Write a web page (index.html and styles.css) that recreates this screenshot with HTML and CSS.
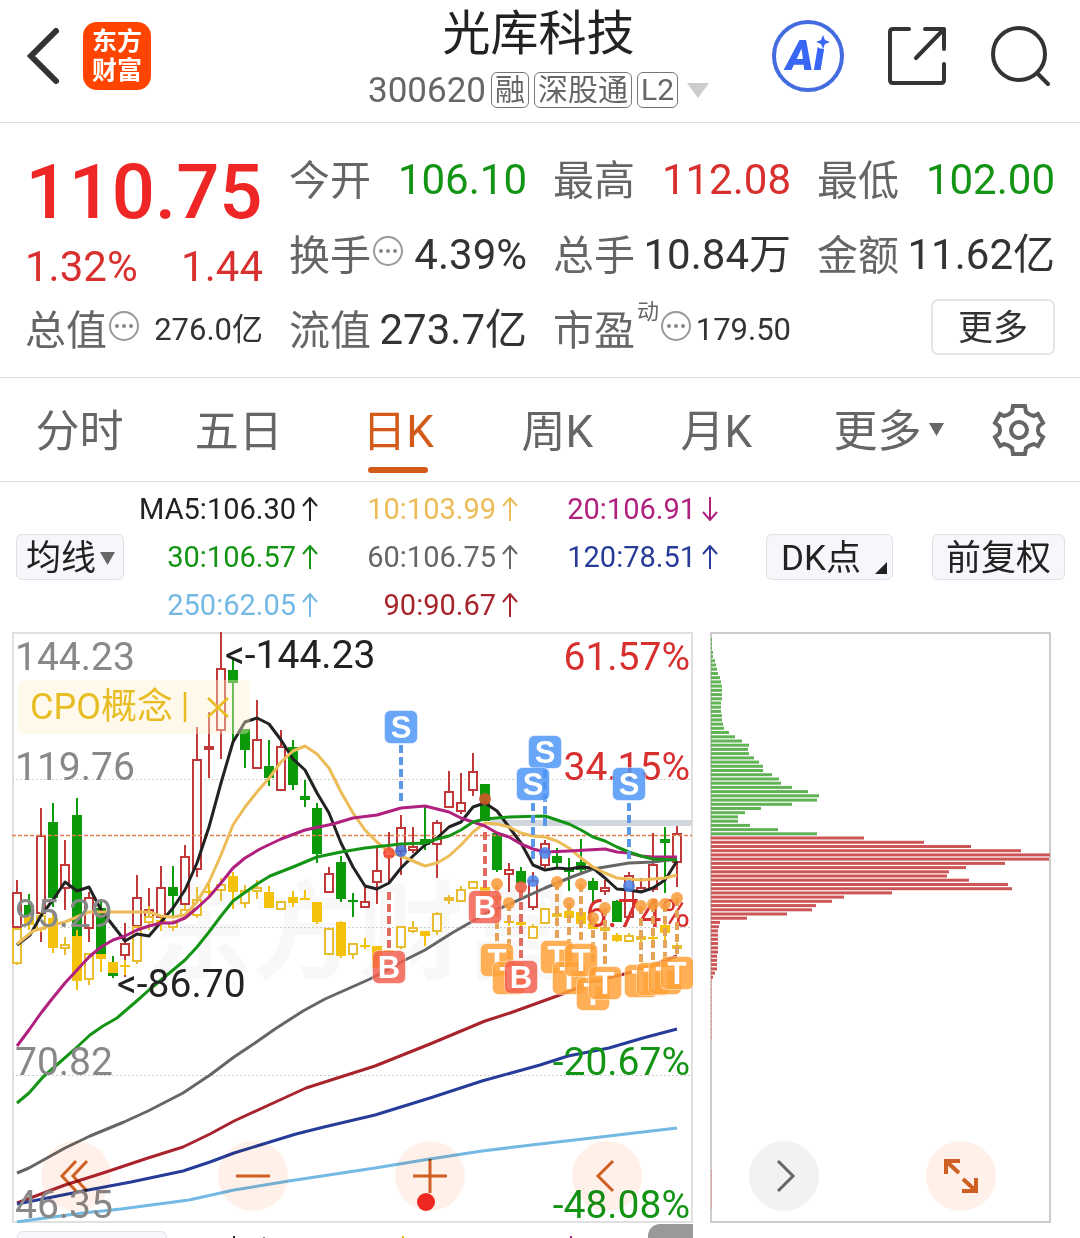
FILE: index.html
```html
<!DOCTYPE html>
<html lang="zh-CN">
<head>
<meta charset="utf-8">
<meta name="viewport" content="width=device-width, initial-scale=1">
<title>光库科技 300620</title>
<link rel="stylesheet" href="styles.css">
</head>
<body>
<header class="topbar">
  <div class="topbar-side">
    <button class="icon-btn" type="button" aria-label="返回">
      <svg width="36" height="60" viewBox="0 0 36 60" fill="none" stroke="#333" stroke-width="6" stroke-linecap="round"><path d="M31 5 6 30 31 55"/></svg>
    </button>
    <a class="logo" href="#">东方<br>财富</a>
  </div>
  <div class="stock">
    <h1 class="stock-name">光库科技</h1>
    <div class="stock-meta">
      <span class="stock-code">300620</span>
      <span class="tag">融</span><span class="tag">深股通</span><span class="tag">L2</span>
      <svg class="meta-arrow" width="22" height="15" viewBox="0 0 22 15"><path d="M0 0H22L11 15Z" fill="#ccc"/></svg>
    </div>
  </div>
  <div class="topbar-side topbar-actions">
    <button class="icon-btn" type="button" aria-label="智能助手">
      <svg width="72" height="72" viewBox="0 0 72 72"><circle cx="36" cy="36" r="34" fill="#fff" stroke="#456be0" stroke-width="4"/><text class="ai-text" x="14" y="50">Ai</text><circle cx="51" cy="20" r="9" fill="#fff"/><path d="M51 15 53 20 58 22 53 24 51 29 49 24 44 22 49 20Z" fill="#3a66f6"/></svg>
    </button>
    <button class="icon-btn" type="button" aria-label="分享">
      <svg width="60" height="60" viewBox="0 0 60 60" fill="none" stroke="#333" stroke-width="4" stroke-linecap="round" stroke-linejoin="round"><path d="M22 3H6Q3 3 3 6V54Q3 57 6 57H54Q57 57 57 54V38M38 3H57V23M57 3 29 32"/></svg>
    </button>
    <button class="icon-btn" type="button" aria-label="搜索">
      <svg width="62" height="62" viewBox="0 0 62 62" fill="none" stroke="#333" stroke-width="4" stroke-linecap="round"><circle cx="29" cy="29" r="26"/><path d="M47 48 58 59"/></svg>
    </button>
  </div>
</header>

<main>
<section class="quote" aria-label="行情">
  <div class="price-box">
    <div class="price">110.75</div>
    <div class="change"><span>1.32%</span><span>1.44</span></div>
  </div>
  <div class="stat"><span class="label">今开</span><span class="value down">106.10</span></div>
  <div class="stat"><span class="label">最高</span><span class="value up">112.08</span></div>
  <div class="stat"><span class="label">最低</span><span class="value down">102.00</span></div>
  <div class="stat"><span class="label">换手</span><svg class="info" width="32" height="32"><use href="#info"/></svg><span class="value">4.39%</span></div>
  <div class="stat"><span class="label">总手</span><span class="value">10.84万</span></div>
  <div class="stat"><span class="label">金额</span><span class="value">11.62亿</span></div>
  <div class="stat"><span class="label">总值</span><svg class="info" width="32" height="32"><use href="#info"/></svg><span class="value small">276.0亿</span></div>
  <div class="stat"><span class="label">流值</span><span class="value">273.7亿</span></div>
  <div class="stat"><span class="label">市盈</span><span class="sup">动</span><svg class="info" width="32" height="32"><use href="#info"/></svg><span class="value small">179.50</span></div>
  <div class="stat stat-more"><button class="more-btn" type="button">更多</button></div>
</section>

<nav class="tabs">
  <a class="tab" href="#">分时</a>
  <a class="tab" href="#">五日</a>
  <a class="tab active" href="#" aria-current="page">日K</a>
  <a class="tab" href="#">周K</a>
  <a class="tab" href="#">月K</a>
  <a class="tab tab-more" href="#">更多<svg width="15" height="13" viewBox="0 0 15 13"><path d="M0 0H15L7.5 13Z" fill="#666"/></svg></a>
  <button class="icon-btn gear" type="button" aria-label="设置">
    <svg width="54" height="54" viewBox="-27 -27 54 54" fill="none" stroke="#666" stroke-width="4"><path d="M-6-24H6L7-18Q10-15 15-14L19-16 24-7 20-4Q18 0 20 4L24 7 19 16 15 14Q10 15 7 18L6 24H-6L-7 18Q-10 15-15 14L-19 16-24 7-20 4Q-18 0-20-4L-24-7-19-16-15-14Q-10-15-7-18Z"/><circle r="8"/></svg>
  </button>
</nav>

<section class="legend">
  <button class="pill" type="button">均线<svg width="15" height="13" viewBox="0 0 15 13"><path d="M0 0H15L7.5 13Z" fill="#666"/></svg></button>
  <ul class="ma-list">
    <li class="ma5">MA5:106.30<svg class="arrow"><use href="#arrow-up"/></svg></li>
    <li class="ma10">10:103.99<svg class="arrow"><use href="#arrow-up"/></svg></li>
    <li class="ma20">20:106.91<svg class="arrow"><use href="#arrow-down"/></svg></li>
    <li class="ma30">30:106.57<svg class="arrow"><use href="#arrow-up"/></svg></li>
    <li class="ma60">60:106.75<svg class="arrow"><use href="#arrow-up"/></svg></li>
    <li class="ma120">120:78.51<svg class="arrow"><use href="#arrow-up"/></svg></li>
    <li class="ma250">250:62.05<svg class="arrow"><use href="#arrow-up"/></svg></li>
    <li class="ma90">90:90.67<svg class="arrow"><use href="#arrow-up"/></svg></li>
  </ul>
  <div class="legend-actions">
    <button class="pill pill-dk" type="button">DK点<svg width="12" height="12" viewBox="0 0 12 12"><path d="M12 0V12H0Z" fill="#222"/></svg></button>
    <button class="pill pill-wide" type="button">前复权</button>
  </div>
</section>

<section class="charts">
  <svg class="kline" id="kline" viewBox="12 632 681 591" role="img" aria-label="日K线图"></svg>
  <svg class="chips" id="chips" viewBox="710 632 341 591" role="img" aria-label="筹码分布"></svg>
  <div class="controls">
    <button class="round" type="button" aria-label="最左"><svg width="34" height="34" viewBox="0 0 34 34"><path d="M17 2 3 17 17 32M28 2 14 17 28 32"/></svg></button>
    <button class="round" type="button" aria-label="缩小"><svg width="34" height="34" viewBox="0 0 34 34"><path d="M0 17H34"/></svg></button>
    <button class="round" type="button" aria-label="放大"><svg width="34" height="34" viewBox="0 0 34 34"><path d="M0 17H34M17 0V34"/></svg><span class="dot"></span></button>
    <button class="round" type="button" aria-label="左移"><svg width="34" height="34" viewBox="0 0 34 34"><path d="M23 2 8 17 23 32"/></svg></button>
    <button class="round round-gray" type="button" aria-label="右移"><svg width="34" height="34" viewBox="0 0 34 34"><path d="M11 2 26 17 11 32"/></svg></button>
    <button class="round" type="button" aria-label="全屏"><svg class="thick" width="34" height="34" viewBox="0 0 34 34"><path d="M2 15V2H16M2 2 15 14M32 19V32H18M32 32 19 20"/></svg></button>
  </div>
</section>

<section class="subchart" aria-label="副图">
  <button class="sub-pill" type="button" aria-label="指标"></button>
  <svg class="sub-marks" viewBox="167 1223 481 15" preserveAspectRatio="xMinYMin"><path d="M234 1236v2" stroke="#222" stroke-width="2"/><path d="M264 1237v1" stroke="#888" stroke-width="2"/><path d="M403 1236v2" stroke="#e6b800" stroke-width="2"/><path d="M571 1236v2" stroke="#b0207f" stroke-width="2"/></svg>
  <div class="sub-tab"></div>
</section>
</main>

<svg class="defs" width="0" height="0" aria-hidden="true">
  <symbol id="info" viewBox="0 0 32 32"><circle cx="16" cy="16" r="14" fill="none" stroke="#999" stroke-width="2"/><g fill="#888"><circle cx="9" cy="16" r="2"/><circle cx="16" cy="16" r="2"/><circle cx="23" cy="16" r="2"/></g></symbol>
  <symbol id="arrow-up" viewBox="0 0 16 24"><path d="M8 24V2M1 9 8 1 15 9" fill="none" stroke="currentColor" stroke-width="2"/></symbol>
  <symbol id="arrow-down" viewBox="0 0 16 24"><path d="M8 0V22M1 15 8 23 15 15" fill="none" stroke="currentColor" stroke-width="2"/></symbol>
</svg>
<script src="chart.js"></script>
</body>
</html>
```
FILE: styles.css
```css
* { box-sizing: border-box; }
body {
  margin: 0;
  background: #fff;
  color: #333;
  font-family: Roboto, "Noto Sans CJK SC", sans-serif;
  font-weight: 400;
}
button { font: inherit; color: inherit; cursor: pointer; }
a { color: inherit; text-decoration: none; }
svg { display: block; flex: none; }
.icon-btn { padding: 0; border: 0; background: none; }
.defs { position: absolute; }

/* top bar */
.topbar {
  display: grid;
  grid-template-columns: 1fr auto 1fr;
  height: 123px;
  padding: 0 28px 0 25px;
  border-bottom: 1px solid #ddd;
}
.topbar-side { display: flex; align-items: center; gap: 22px; height: 112px; }
.topbar-actions { justify-content: flex-end; gap: 43px; }
.logo {
  width: 68px;
  height: 68px;
  padding-top: 5px;
  border-radius: 14px;
  background: #ff4400;
  color: #fff;
  font-size: 25px;
  font-weight: 700;
  line-height: 29px;
  text-align: center;
}
.ai-text { font-size: 42px; font-weight: 900; font-style: italic; fill: #3a66f6; }
.stock { display: flex; flex-direction: column; align-items: center; }
.stock-name { margin: 0; color: #222; font-size: 48px; font-weight: 400; line-height: 68px; }
.stock-meta { display: flex; align-items: center; gap: 5px; height: 44px; color: #666; }
.stock-code { font-size: 35px; }
.tag {
  height: 36px;
  padding: 0 3px;
  border: 1px solid #777;
  border-radius: 6px;
  font-size: 30px;
  line-height: 34px;
}
.meta-arrow { margin-left: 4px; }

/* quote */
.quote {
  display: grid;
  grid-template-columns: repeat(4, minmax(0, 1fr));
  grid-auto-rows: 75px;
  column-gap: 26px;
  padding: 19px 25px 10px;
  border-bottom: 1px solid #ddd;
}
.price-box { grid-row: span 2; padding-top: 12px; color: #ee2626; }
.price { font-size: 76px; font-weight: 500; line-height: 76px; text-align: center; }
.change {
  display: flex;
  justify-content: space-between;
  margin-top: 12px;
  color: #d8302f;
  font-size: 42px;
  line-height: 50px;
}
.stat { display: flex; align-items: center; line-height: 75px; white-space: nowrap; }
.label { padding-top: 4px; color: #666; font-size: 41px; line-height: 71px; }
.value { margin-left: auto; font-size: 42px; }
.small { font-size: 31px; }
.up { color: #d8302f; }
.down { color: #149414; }
.info { margin: 0 0 8px 1px; }
.sup { align-self: flex-start; margin-left: 2px; color: #666; font-size: 22px; line-height: 39px; }
.stat-more { justify-content: flex-end; }
.more-btn {
  width: 124px;
  height: 56px;
  margin-bottom: 5px;
  padding: 4px 0 0;
  border: 2px solid #e6e6e6;
  border-radius: 7px;
  background: #fff;
  font-size: 35px;
  line-height: 48px;
}

/* tabs */
.tabs {
  display: grid;
  grid-template-columns: repeat(5, 1fr) 186px 74px;
  padding-right: 24px;
  border-bottom: 1px solid #ddd;
}
.tab {
  display: flex;
  position: relative;
  align-items: center;
  justify-content: center;
  height: 103px;
  padding-top: 6px;
  color: #666;
  font-size: 44px;
  line-height: 97px;
}
.tab.active { color: #d45a1a; }
.tab.active::after {
  position: absolute;
  bottom: 8px;
  width: 60px;
  height: 6px;
  border-radius: 3px;
  background: #d45a1a;
  content: "";
}
.tab-more { gap: 8px; }
.tab-more svg { margin-bottom: 6px; }
.gear { display: flex; align-items: center; justify-content: center; }

/* moving averages */
.legend { display: flex; align-items: center; padding: 3px 15px 3px 16px; }
.pill {
  display: flex;
  align-items: center;
  gap: 4px;
  height: 46px;
  padding: 3px 8px 0 9px;
  border: 1px solid #dfe1e6;
  border-radius: 6px;
  background: #f6f7fa;
  color: #222;
  font-size: 35px;
  line-height: 41px;
}
.pill-wide { padding: 3px 13px 0; }
.pill-dk { gap: 14px; padding: 3px 5px 0 14px; }
.pill-dk svg { align-self: flex-end; margin-bottom: 5px; }
.ma-list {
  display: grid;
  grid-template-columns: 194px 200px 200px;
  margin: 0;
  padding: 0;
  list-style: none;
  font-size: 29px;
  line-height: 48px;
}
.ma-list li { display: flex; align-items: center; justify-content: flex-end; gap: 6px; }
.arrow { width: 16px; height: 24px; }
.legend-actions { display: flex; gap: 39px; margin-left: auto; }
.ma5 { color: #222; }
.ma10 { color: #ecbc58; }
.ma20 { color: #b0207f; }
.ma30 { color: #149414; }
.ma60 { color: #666; }
.ma120 { color: #263c98; }
.ma250 { color: #74b8e4; }
.ma90 { color: #a8242c; }

/* charts */
.charts {
  display: grid;
  position: relative;
  grid-template-columns: 681fr 341fr;
  gap: 17px;
  padding: 0 29px 0 12px;
}
.kline, .chips { width: 100%; height: auto; }
.line { fill: none; stroke: currentColor; stroke-width: 3; stroke-linejoin: round; }
.axis { fill: #888; font-size: 39px; }
.mark { fill: #222; font-size: 39px; }
.pct-up { fill: #d8302f; font-size: 39px; text-anchor: end; }
.pct-down { fill: #149414; font-size: 39px; text-anchor: end; }
.watermark { fill: #f8f8f8; font-size: 106px; font-weight: 700; }
.concept { fill: #e8bd24; font-size: 36px; }
.badge { fill: #fff; font-family: "Liberation Sans", sans-serif; font-size: 31px; font-weight: 700; text-anchor: middle; }
.controls {
  display: flex;
  position: absolute;
  right: 84px;
  bottom: 12px;
  left: 41px;
  justify-content: space-between;
  mix-blend-mode: multiply;
}
.round {
  display: flex;
  position: relative;
  align-items: center;
  justify-content: center;
  width: 70px;
  height: 70px;
  padding: 0;
  border: 0;
  border-radius: 50%;
  background: #fff1ea;
  color: #cf5f22;
}
.round svg { fill: none; stroke: currentColor; stroke-width: 3; }
.round .thick { stroke-width: 4; }
.round-gray { background: #f2f2f2; color: #666; }
.dot {
  position: absolute;
  bottom: 0;
  left: 22px;
  width: 18px;
  height: 18px;
  border-radius: 50%;
  background: #f02822;
}

/* top edge of the next panel */
.subchart {
  display: flex;
  align-items: flex-end;
  height: 15px;
  padding: 0 387px 0 17px;
  overflow: hidden;
}
.sub-pill {
  width: 150px;
  height: 7px;
  border: 1px solid #dfe1e6;
  border-bottom: 0;
  border-radius: 6px 6px 0 0;
  background: #f6f7fa;
}
.sub-marks { flex: 1; height: 15px; }
.sub-tab { width: 45px; height: 14px; border-radius: 12px 0 0 0; background: #999; }
```
FILE: chart.js
```js
// Candles: [kind, high, bodyTop, bodyBottom, low]; r = hollow, g = filled
const candles = [
  ['r',880,892,928,928],['g',894,905,915,922],['r',808,835,914,942],['g',803,822,898,907],
  ['r',840,864,889,910],['g',798,815,936,936],['r',892,897,929,942],['g',899,908,954,954],
  ['g',956,962,976,978],['r',923,943,956,977],['r',875,897,927,947],['r',888,909,918,922],
  ['r',866,887,918,918],['g',866,887,896,918],['r',845,856,905,905],['r',727,759,870,877],
  ['r',712,746,750,778],['r',632,668,731,759],['g',657,670,683,742],['g',729,729,750,768],
  ['r',700,739,769,769],['g',740,766,778,786],['r',730,746,791,791],['g',740,747,785,790],
  ['g',780,796,800,807],['g',803,808,854,863],['r',867,873,893,893],['g',856,862,899,902],
  ['g',893,900,902,917],['r',887,901,908,908],['r',848,870,883,904],['r',832,850,857,882],
  ['r',815,827,852,875],['r',827,846,851,853],['g',807,839,845,850],['r',820,822,845,878],
  ['r',771,791,808,808],['r',773,802,812,814],['r',753,771,791,796],['g',784,784,821,821],
  ['g',833,833,870,872],['r',863,869,875,892],['g',867,871,883,883],['r',872,880,908,910],
  ['r',840,843,866,868],['g',848,856,863,868],['g',858,869,872,891],['g',839,862,870,872],
  ['g',878,881,890,903],['r',880,887,892,895],['g',900,901,922,922],['r',872,875,918,918],
  ['r',878,887,892,892],['r',833,864,890,892],['g',827,839,843,893],['r',826,833,863,887]
];
const overlay = [
  ['r',928,928,964,965],['g',915,917,925,930],['r',912,915,930,932],['g',910,918,948,953],
  ['r',937,944,949,955],['g',930,936,981,990],['r',953,953,980,985],['g',954,954,959,972],
  ['g',962,962,973,973],['g',960,965,967,975],['r',926,926,962,964],['r',906,916,923,930],
  ['g',918,920,923,931],['r',920,922,928,931],['r',905,909,917,918],['r',887,899,916,918],
  ['g',882,891,893,895],['r',878,884,891,901],['g',872,876,892,909],['r',885,890,904,908],
  ['r',880,887,892,899],['g',886,892,908,908],['r',901,901,910,910],['g',891,897,903,907],
  ['g',890,898,900,900],['g',902,902,922,924],['r',928,928,955,955],['g',921,922,956,958],
  ['r',943,943,955,959],['g',938,945,947,949],['g',946,946,968,968],['g',950,950,952,952],
  ['r',926,926,948,949],['r',921,927,932,933],['g',931,931,936,946],['r',912,913,932,935],
  ['r',895,897,900,904],['r',886,889,902,902],['r',881,881,889,889],['g',887,887,900,900],
  ['r',894,896,900,900],['g',917,921,923,926],['g',918,922,925,927],['r',924,926,939,939],
  ['r',908,908,924,924],['r',911,913,917,919],['g',907,911,918,920],['g',908,912,924,925],
  ['g',920,923,929,929],['r',925,927,931,932],['g',933,935,941,942],['r',933,935,942,942],
  ['r',934,936,940,942],['g',935,937,939,942],['g',922,925,933,941],['r',943,945,949,952]
];
const averages = {
  ma60: '17,1173 29,1168 65,1148 90,1136 124,1122 148,1111 183,1093 210,1075 234,1057 255,1043 275,1029 303,1011 325,999 370,979 407,959 425,950 452,933 485,914 503,907 545,888 569,878 593,869 605,867 629,863 653,862 677,859',
  ma90: '17,1203 65,1185 103,1173 148,1158 183,1147 210,1134 234,1121 282,1099 306,1088 375,1066 430,1044 485,1021 510,1013 557,996 593,982 640,970 677,956',
  ma120: '17,1204 83,1191 131,1182 183,1171 210,1162 234,1153 296,1134 324,1127 375,1115 430,1098 482,1081 540,1065 568,1056 609,1048 643,1038 677,1029',
  ma250: '17,1222 38,1219 83,1213 121,1209 189,1200 234,1190 289,1181 375,1168 430,1159 482,1151 540,1144 609,1136 677,1128',
  ma5: '17,945 30,935 42,914 53,900 65,882 77,891 89,887 101,910 125,941 137,934 149,936 161,922 173,908 185,890 197,863 209,827 221,783 233,742 245,722 257,718 269,724 281,740 293,759 305,770 317,793 329,813 341,843 353,867 365,886 377,889 389,883 401,868 413,856 425,845 437,838 449,827 461,822 473,807 485,803 497,811 509,827 521,843 533,865 545,870 557,868 569,869 581,867 593,868 605,878 617,889 629,890 641,892 653,888 665,880 677,861',
  ma10: '17,944 33,931 53,925 65,922 77,917 89,912 125,912 149,912 161,916 173,917 185,915 197,902 209,882 221,855 233,825 245,807 257,792 270,777 281,762 293,751 305,746 317,754 329,768 341,792 353,813 365,830 377,842 389,852 401,856 413,861 425,866 437,863 449,856 461,845 473,832 485,823 497,824 509,827 521,833 533,836 545,837 557,841 569,848 581,858 593,867 605,873 617,878 641,880 665,878 677,875',
  ma20: '17,1046 29,1030 41,1013 52,999 65,983 77,970 89,957 101,947 113,940 125,936 137,930 149,926 161,923 173,923 185,918 197,908 209,897 221,883 233,868 245,858 260,849 281,839 305,830 333,824 353,818 377,815 401,808 413,807 425,806 449,812 461,818 485,826 497,833 509,837 521,844 533,849 545,852 569,851 605,849 617,852 629,853 641,856 653,857 677,857',
  ma30: '17,1103 29,1093 43,1077 59,1063 76,1048 90,1035 103,1026 117,1018 139,999 149,990 173,970 185,960 197,947 209,932 221,916 233,901 257,884 270,876 293,867 317,857 341,852 365,848 401,844 425,843 437,839 449,836 461,830 473,822 485,819 509,817 545,816 569,824 581,830 593,837 605,841 617,847 629,852 641,856 653,859 677,860'
};
// Trade markers: [letter, x, badge centre y, dash start, dash end]
const badges = [
  ['T',497,960,885,943],['T',509,978,903,960],['B',389,967,892,950],['B',485,907,832,890],['B',521,977,890,960],
  ['T',557,957,882,940],['T',569,978,903,960],['T',581,960,884,943],['T',593,994,918,976],['T',605,983,908,966],
  ['T',641,981,906,964],['T',653,979,904,962],['T',665,978,904,961],['T',677,973,898,956],
  ['S',401,727,745,803],['S',545,752,770,827],['S',533,784,803,860],['S',629,784,803,860]
];
const dots = [
  ['#f5513a',389,853],['#3f6fd8',401,851],['#d9552b',485,799],['#f79b3a',497,884],['#f79b3a',509,903],
  ['#e8553a',521,887],['#4a82e8',533,881],['#4a82e8',545,853],['#f79b3a',557,882],['#f79b3a',569,903],
  ['#f79b3a',581,884],['#f79b3a',593,918],['#f79b3a',605,908],['#4a82e8',629,886],['#f79b3a',641,906],
  ['#f79b3a',653,904],['#f79b3a',665,904],['#f79b3a',677,898]
];
const badgeColor = { T: '#ffa238', B: '#f4604f', S: '#4d96f7' };
const dashColor = { T: '#e5a35a', B: '#e06c60', S: '#5b98e8' };

function drawCandles(rows, hollow, solid) {
  return rows.map(([kind, high, top, bottom, low], i) => {
    const x = 17 + 12 * i;
    if (kind === 'g') {
      return `<path d="M${x} ${high}V${low}" stroke="${solid}" stroke-width="2"/>` +
        `<rect x="${x - 5}" y="${top}" width="10" height="${bottom - top}" fill="${solid}"/>`;
    }
    return `<path d="M${x} ${high}V${top}M${x} ${bottom}V${low}" stroke="${hollow}" stroke-width="2"/>` +
      `<rect x="${x - 4}" y="${top + 1}" width="8" height="${Math.max(bottom - top - 2, 2)}" fill="#fff" stroke="${hollow}" stroke-width="2"/>`;
  }).join('');
}

let k = '<rect x="13" y="633" width="679" height="589" fill="#fff" stroke="#e0e0e0" stroke-width="2"/>';
k += '<text class="watermark" x="146" y="970">东方财富</text>';
k += '<path d="M12 779.5H692M12 927.5H692M12 1075.5H692" stroke="#ccc" stroke-dasharray="2 2"/>';
k += '<path d="M490 823H692" stroke="#d2d6dd" stroke-width="6"/>';
k += drawCandles(candles, '#c0393a', '#0a9a0a');
k += drawCandles(overlay, '#e8bd30', '#f4c20d');
k += '<path d="M12 835.5H692" stroke="#e0824f" stroke-width="1.5" stroke-dasharray="4 2"/>';
for (const [name, points] of Object.entries(averages)) {
  k += `<polyline class="line ${name}" points="${points}"/>`;
}
k += '<rect x="18" y="680" width="232" height="54" rx="6" fill="#ffefcc" opacity=".4"/>';
k += '<text class="concept" x="30" y="719">CPO概念</text><path d="M185 692V722M208 698 228 717M228 698 208 717" stroke="#e8bd24" stroke-width="2.5"/>';
[['144.23',670],['119.76',780],['95.29',927],['70.82',1075],['46.35',1218]].forEach(([t, y]) => {
  k += `<text class="axis" x="15" y="${y}">${t}</text>`;
});
k += '<text class="mark" x="225" y="668">&lt;-144.23</text><text class="mark" x="117" y="997">&lt;-86.70</text>';
[['61.57%',670,'up'],['34.15%',780,'up'],['6.74%',927,'up'],['-20.67%',1075,'down'],['-48.08%',1218,'down']].forEach(([t, y, dir]) => {
  k += `<text class="pct-${dir}" x="690" y="${y}">${t}</text>`;
});
k += badges.map(([l, x, , a, b]) => `<path d="M${x} ${a}V${b}" stroke="${dashColor[l]}" stroke-width="4" stroke-dasharray="8 4"/>`).join('');
k += dots.map(([c, x, y]) => `<circle cx="${x}" cy="${y}" r="6" fill="${c}" opacity=".85"/>`).join('');
k += badges.map(([l, x, y]) =>
  `<rect x="${x - 16.5}" y="${y - 16.5}" width="33" height="33" rx="6" fill="${badgeColor[l]}" stroke="#fff" stroke-opacity=".5" opacity=".84"/>` +
  `<text class="badge" x="${x}" y="${y + 11}">${l}</text>`).join('');
document.getElementById('kline').innerHTML = k;

// Chip distribution: bar lengths by price level, from the top down
const profit = [1,1,1,2,2,4,5,6,7,9,10,11,11,11,11,10,10,10,11,11,12,13,18,24,31,38,37,38,43,48,52,52,61,68,70,81,97,108,106,81,50,34,27,27,39,67,106];
const loss = [153,213,260,310,339,338,294,255,238,236,258,297,301,181,133,121,105,101,76,36,9,8,7,7,7,7,7,7,6,6,6,6,4,2];
let c = '<rect x="711" y="633" width="339" height="589" fill="#fff" stroke="#ccc" stroke-width="2"/>';
profit.concat(loss).forEach((w, i) => {
  const y = (638.2 + i * 4.22).toFixed(1);
  c += `<rect x="711" y="${y}" width="${w}" height="3" fill="${i < profit.length ? '#62b256' : '#cc5555'}"/>`;
});
c += '<path d="M711.5 980V1040M711.5 1170V1210" stroke="#e09a9a" stroke-dasharray="3 1"/>';
document.getElementById('chips').innerHTML = c;
```
